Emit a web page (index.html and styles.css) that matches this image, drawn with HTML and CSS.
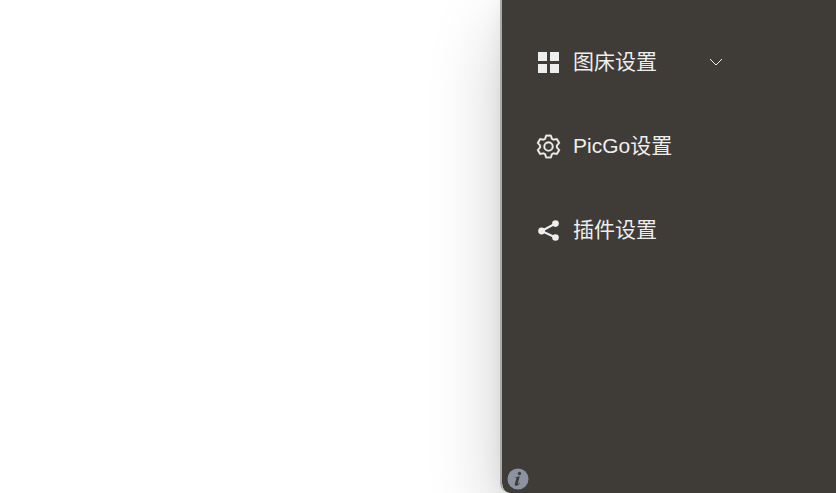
FILE: index.html
```html
<!DOCTYPE html>
<html lang="zh-CN">
<head>
<meta charset="utf-8">
<title>PicGo</title>
<link rel="stylesheet" href="styles.css">
</head>
<body>
<main class="desktop">
  <aside class="sidebar">
    <nav class="menu">
      <button class="menu-item" type="button" aria-expanded="false">
        <svg class="icon" viewBox="0 0 27 27" aria-hidden="true"><path d="M3 3h9v9H3zM15 3h9v9h-9zM3 15h9v9H3zM15 15h9v9h-9z"/></svg>
        <span class="label">图床设置</span>
        <svg class="arrow" viewBox="0 0 18 18" aria-hidden="true"><path d="M3 6l6 6 6-6"/></svg>
      </button>
      <a class="menu-item" href="#picgo">
        <svg class="icon gear" viewBox="0 0 1024 1024" aria-hidden="true"><path d="M600.704 64a32 32 0 0 1 30.464 22.208l35.2 109.376c14.784 7.232 28.928 15.36 42.432 24.512l112.384-24.192a32 32 0 0 1 34.432 15.36L944.32 364.8a32 32 0 0 1-4.032 37.504l-77.12 85.12a357.12 357.12 0 0 1 0 49.024l77.12 85.248a32 32 0 0 1 4.032 37.504l-88.704 153.6a32 32 0 0 1-34.432 15.296L708.8 803.904c-13.44 9.088-27.648 17.28-42.368 24.512l-35.264 109.376A32 32 0 0 1 600.704 960H423.296a32 32 0 0 1-30.464-22.208L357.696 828.48a351.616 351.616 0 0 1-42.56-24.64l-112.32 24.256a32 32 0 0 1-34.432-15.36L79.68 659.2a32 32 0 0 1 4.032-37.504l77.12-85.248a357.12 357.12 0 0 1 0-48.896l-77.12-85.248A32 32 0 0 1 79.68 364.8l88.704-153.6a32 32 0 0 1 34.432-15.296l112.32 24.256c13.568-9.152 27.776-17.408 42.56-24.64l35.2-109.312A32 32 0 0 1 423.232 64H600.64zm-23.424 64H446.72l-36.352 113.088-24.512 11.968a294.113 294.113 0 0 0-34.816 20.096l-22.656 15.36-116.224-25.088-65.28 113.152 79.68 88.192-1.92 27.136a293.12 293.12 0 0 0 0 40.192l1.92 27.136-79.808 88.192 65.344 113.152 116.224-25.024 22.656 15.296a294.113 294.113 0 0 0 34.816 20.096l24.512 11.968L446.72 896h130.688l36.48-113.152 24.448-11.904a288.282 288.282 0 0 0 34.752-20.096l22.592-15.296 116.288 25.024 65.28-113.152-79.744-88.192 1.92-27.136a293.12 293.12 0 0 0 0-40.256l-1.92-27.136 79.808-88.128-65.344-113.152-116.288 24.96-22.592-15.232a287.616 287.616 0 0 0-34.752-20.096l-24.448-11.904L577.344 128zM512 320a192 192 0 1 1 0 384 192 192 0 0 1 0-384zm0 64a128 128 0 1 0 0 256 128 128 0 0 0 0-256z"/></svg>
        <span class="label">PicGo设置</span>
      </a>
      <a class="menu-item" href="#plugins">
        <svg class="icon" viewBox="0 0 27 27" aria-hidden="true"><path class="link" d="M20.500 6.500 6.500 14l14 6.500"/><circle cx="20.500" cy="6.600" r="3.300"/><circle cx="6.600" cy="14" r="3.400"/><circle cx="20.500" cy="20.500" r="3.300"/></svg>
        <span class="label">插件设置</span>
      </a>
    </nav>
    <button class="info" type="button" aria-label="关于">
      <svg viewBox="0 0 22 22" aria-hidden="true"><circle class="disc" cx="11" cy="11" r="10.500"/><circle class="mark" cx="12.500" cy="5.500" r="1.700"/><path class="mark" d="M7.800 9.300l5-1-2 7.100c-.2.900.4.700 1.900-1l.5.400c-1.300 1.900-2.500 2.900-3.900 2.900-1.300 0-1.800-.9-1.400-2.300l1.500-5.200c.2-.8-.1-1.100-1.700-1.200z"/></svg>
    </button>
  </aside>
</main>
</body>
</html>
```
FILE: styles.css
```css
* {
  box-sizing: border-box;
}

body {
  margin: 0;
  background: #fff;
  font-family: "Liberation Sans", "Noto Sans CJK SC", sans-serif;
}

.desktop {
  display: flex;
  justify-content: flex-end;
  min-height: 100vh;
  overflow: hidden;
}

.sidebar {
  display: flex;
  flex-direction: column;
  justify-content: space-between;
  width: 336px;
  padding-top: 20px;
  border-left: 2px solid #aaa;
  border-bottom-left-radius: 10px;
  background: #3f3c37;
  background-clip: padding-box;
  box-shadow: 0 28px 72px rgba(0, 0, 0, 0.2), 0 0 20px rgba(0, 0, 0, 0.06);
}

.menu {
  display: flex;
  flex-direction: column;
}

.menu-item {
  display: flex;
  align-items: center;
  gap: 11px;
  width: 223px;
  height: 84px;
  padding: 0 0 0 33px;
  border: 0;
  background: none;
  color: #eee;
  font: inherit;
  font-size: 21px;
  line-height: 32px;
  text-align: left;
  text-decoration: none;
  cursor: pointer;
}

.icon {
  width: 27px;
  height: 27px;
  fill: currentColor;
}

.gear {
  stroke: currentColor;
  stroke-width: 10;
}

.link {
  fill: none;
  stroke: currentColor;
  stroke-width: 2;
}

.arrow {
  width: 18px;
  height: 18px;
  margin-left: auto;
  fill: none;
  stroke: currentColor;
  stroke-width: 1;
}

.info {
  align-self: flex-start;
  width: 22px;
  height: 22px;
  margin: 0 0 3px 5px;
  padding: 0;
  border: 0;
  background: none;
  cursor: pointer;
}

.info svg {
  display: block;
}

.disc {
  fill: #8b93a2;
}

.mark {
  fill: #3f3c37;
}
```
